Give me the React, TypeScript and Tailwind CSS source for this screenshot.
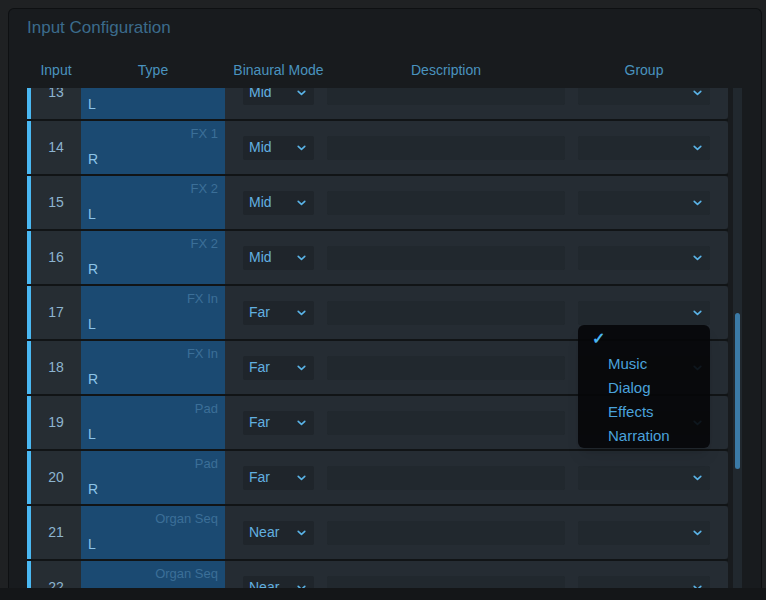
import { clsx } from 'clsx';

type Row = {
  input: number;
  side: 'L' | 'R';
  source: string;
  mode: string;
};

const ROWS: Row[] = [
  { input: 13, side: 'L', source: 'FX 1', mode: 'Mid' },
  { input: 14, side: 'R', source: 'FX 1', mode: 'Mid' },
  { input: 15, side: 'L', source: 'FX 2', mode: 'Mid' },
  { input: 16, side: 'R', source: 'FX 2', mode: 'Mid' },
  { input: 17, side: 'L', source: 'FX In', mode: 'Far' },
  { input: 18, side: 'R', source: 'FX In', mode: 'Far' },
  { input: 19, side: 'L', source: 'Pad', mode: 'Far' },
  { input: 20, side: 'R', source: 'Pad', mode: 'Far' },
  { input: 21, side: 'L', source: 'Organ Seq', mode: 'Near' },
  { input: 22, side: 'R', source: 'Organ Seq', mode: 'Near' },
];

const GROUPS = ['Music', 'Dialog', 'Effects', 'Narration'];

function Chevron() {
  return (
    <svg width="9" height="6" viewBox="0 0 9 6" className="shrink-0">
      <path d="M1.2 1.3 L4.5 4.4 L7.8 1.3" fill="none" stroke="#5ab4e8" strokeWidth="1.6" strokeLinecap="round" strokeLinejoin="round" />
    </svg>
  );
}

function GroupMenu() {
  return (
    <div className="absolute left-[551px] top-[39px] w-[132px] rounded-[6px] bg-[#050608]/90 pt-[1px] shadow-lg">
      <div className="h-[26px] flex items-center pl-[14px] text-[16px] text-[#4ab4f0] font-bold">✓</div>
      {GROUPS.map(g => (
        <div key={g} className="h-6 flex items-center pl-[30px] text-[15px] text-[#4aa2dc]">
          {g}
        </div>
      ))}
    </div>
  );
}

function InputRow({ row, open }: { row: Row; open?: boolean }) {
  return (
    <div className={clsx('relative flex h-[55px] border-b-2 border-[#111416]', open && 'z-10')}>
      <div className="w-[4px] bg-[#4ab8f2]" />
      <div className="w-[50px] bg-[#262d33] flex items-center justify-center text-[14px] text-[#8db4cf]">
        {row.input}
      </div>
      <div className="w-[144px] bg-[#1b4a72] flex flex-col justify-between pt-[4px] pb-[6px] px-[7px]">
        <span className="self-end text-[13px] text-[#3b6f98] leading-[18px]">{row.source}</span>
        <span className="text-[14px] text-[#8cc4e8] leading-[18px]">{row.side}</span>
      </div>
      <div className="flex-1 flex items-center bg-[#252c33] rounded-r-[3px] px-[18px] gap-[13px]">
        <div className="w-[71px] h-6 bg-[#1f252b] rounded-[2px] flex items-center justify-between pl-[6px] pr-[8px]">
          <span className="text-[14px] text-[#62b0e0]">{row.mode}</span>
          <Chevron />
        </div>
        <div className="w-[238px] h-6 bg-[#21282e] rounded-[2px]" />
        <div className="w-[132px] h-6 bg-[#21282e] rounded-[2px] flex items-center justify-end pr-[8px]">
          <Chevron />
        </div>
      </div>
      {open && <GroupMenu />}
    </div>
  );
}

export default function App() {
  return (
    <div className="w-[766px] h-[600px] overflow-hidden bg-[#1f2123] flex flex-col" style={{ fontFamily: '"Liberation Sans", Arial, sans-serif' }}>
      <div className="h-[588px] pt-[8px] pl-[8px] pr-[4px]">
        <div className="h-[580px] bg-[#181b1e] border border-b-0 border-[#0e1012] rounded-t-[6px] pl-[18px] pr-[19px] pt-[9px]">
          <h1 className="h-5 leading-5 text-[17px] text-[#3b6b8c]">Input Configuration</h1>

          <div className="flex mt-[24px] h-4 leading-4 text-[14px] text-[#4a93bf] w-[701px]">
            <div className="w-[54px] pl-[4px] flex justify-center">Input</div>
            <div className="w-[144px] flex justify-center">Type</div>
            <div className="flex px-[18px] gap-[13px]">
              <div className="w-[71px] flex justify-center whitespace-nowrap">Binaural Mode</div>
              <div className="w-[238px] flex justify-center">Description</div>
              <div className="w-[132px] flex justify-center">Group</div>
            </div>
          </div>

          <div className="flex gap-[5px] mt-[10px] h-[500px]">
            <div className="w-[701px] h-full overflow-hidden">
              <div className="-mt-[22px]">
                {ROWS.map(r => (
                  <InputRow key={r.input} row={r} open={r.input === 17} />
                ))}
              </div>
            </div>
            <div className="w-[9px] h-full bg-[#21282e] pt-[225px] flex justify-center">
              <div className="w-[5px] h-[156px] rounded-full bg-[#3b7aa6]" />
            </div>
          </div>
        </div>
      </div>
      <div className="flex-1 bg-[#141618]" />
    </div>
  );
}
